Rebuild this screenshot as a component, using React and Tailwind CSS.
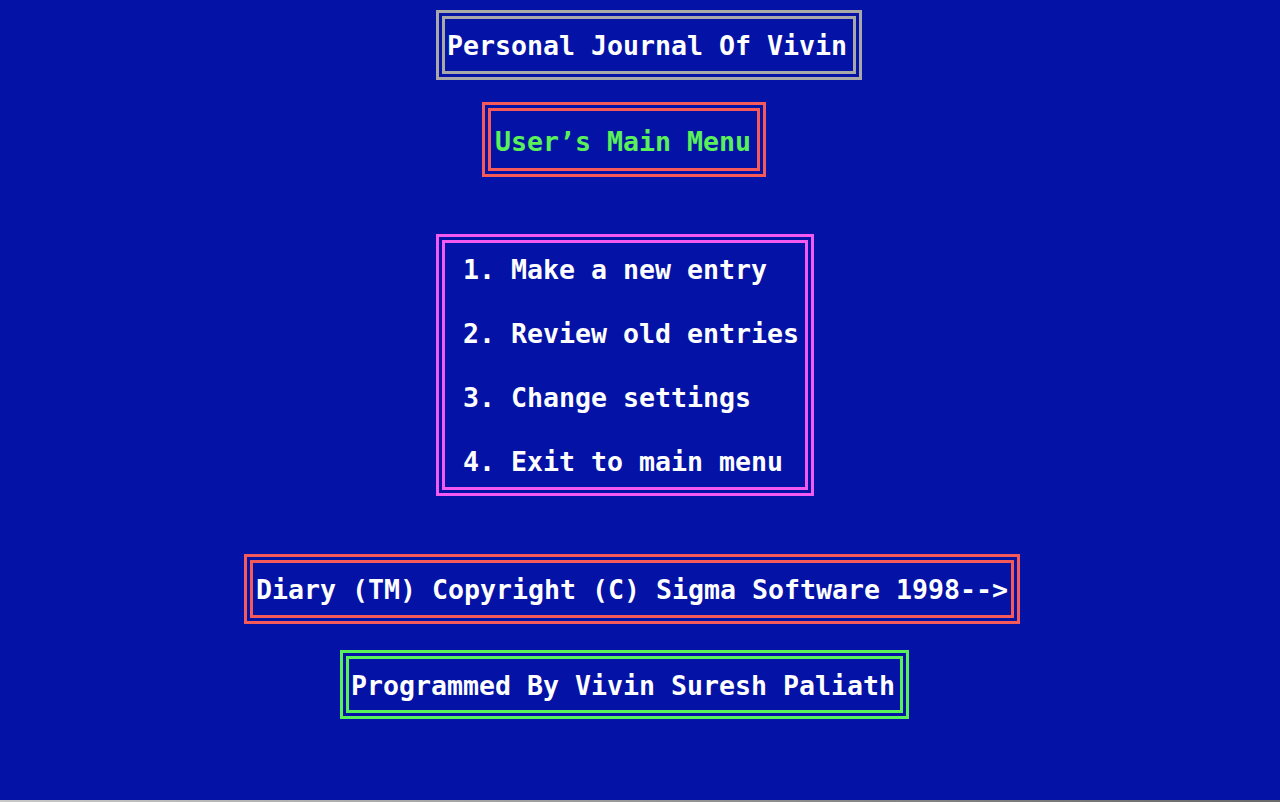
import React from "react";

// DOS text-mode screen: 16px char cells, double-line frames
function Frame({ color, className, inner, children }) {
  return (
    <div className={`border-[3px] p-[3px] ${color} ${className}`}>
      <div className={`border-[3px] ${color} ${inner}`}>{children}</div>
    </div>
  );
}

const menu = [
  "1. Make a new entry",
  "2. Review old entries",
  "3. Change settings",
  "4. Exit to main menu",
];

export default function App() {
  return (
    <div
      className="w-full h-[802px] overflow-hidden bg-[#0412a6] text-[26.58px] leading-[32px] font-bold text-white whitespace-pre"
      style={{ fontFamily: '"DejaVu Sans Mono", "Liberation Mono", monospace' }}
    >
      <div className="h-[800px] flex flex-col items-start pt-[10px]">
        <Frame color="border-[#a8a8a8]" className="ml-[436px]" inner="pl-[2px] pr-[6px] pt-[11px] pb-[9px]">
          Personal Journal Of Vivin
        </Frame>

        <Frame color="border-[#f55a5a]" className="ml-[482px] mt-[22px]" inner="pl-[4px] pr-[6px] pt-[15px] pb-[10px] text-[#5af05a]">
          User’s Main Menu
        </Frame>

        <Frame color="border-[#f25af2]" className="ml-[436px] mt-[57px]" inner="pl-[18px] pr-[6px] pt-[11px] pb-[9px] flex flex-col gap-[32px]">
          {menu.map((item) => (
            <div key={item}>{item}</div>
          ))}
        </Frame>

        <Frame color="border-[#f55a5a]" className="ml-[244px] mt-[58px]" inner="pl-[3px] pr-[3px] pt-[11px] pb-[9px]">
          Diary (TM) Copyright (C) Sigma Software 1998--&gt;
        </Frame>

        <Frame color="border-[#5af05a]" className="ml-[340px] mt-[26px]" inner="pl-[2px] pr-[5px] pt-[11px] pb-[8px]">
          Programmed By Vivin Suresh Paliath
        </Frame>
      </div>
      <div className="h-[2px] bg-gradient-to-r from-[#c8c8c8] to-[#6a6a6a]" />
    </div>
  );
}
